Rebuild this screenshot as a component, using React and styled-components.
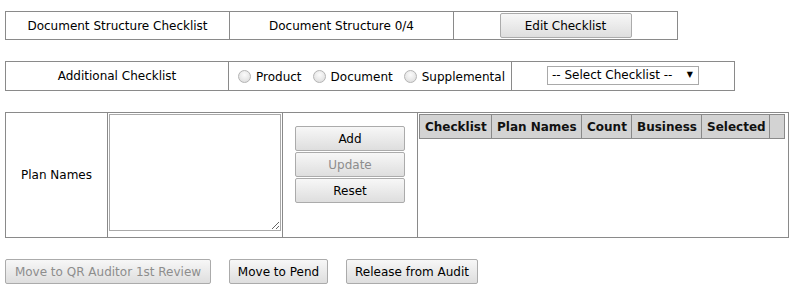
import styled, { createGlobalStyle } from "styled-components";

const GlobalStyle = createGlobalStyle`
  body {
    margin: 0;
    padding: 11px 5px;
    font-family: "DejaVu Sans", Verdana, sans-serif;
    font-size: 12px;
    color: #000;
    background: #fff;
  }
`;

const Page = styled.div`
  display: flex;
  flex-direction: column;
  align-items: flex-start;
  gap: 21px;
`;

const Row = styled.div`
  display: grid;
  grid-template-columns: ${(p) => p.$cols};
  height: ${(p) => p.$height}px;
  border: 1px solid #8a8a8a;
  box-sizing: border-box;
`;

const Cell = styled.div`
  display: flex;
  align-items: ${(p) => p.$align || "center"};
  justify-content: ${(p) => p.$justify || "center"};
  padding: ${(p) => p.$pad || "0"};
  border-left: ${(p) => (p.$first ? "none" : "1px solid #8a8a8a")};
  box-sizing: border-box;
  min-width: 0;
`;

const Button = styled.button`
  font-family: "DejaVu Sans", Verdana, sans-serif;
  font-size: 12px;
  height: 25px;
  width: ${(p) => (p.$width ? `${p.$width}px` : "auto")};
  padding: 0;
  white-space: nowrap;
  color: ${(p) => (p.disabled ? "#8d8d8d" : "#000")};
  background: linear-gradient(#f7f7f7, #dedede);
  border: 1px solid #ababab;
  border-radius: 2px;
  box-sizing: border-box;
  cursor: default;
`;

const RadioGroup = styled.div`
  display: flex;
  align-items: center;
  gap: 11px;
  padding-top: 2px;
`;

const RadioLabel = styled.label`
  display: flex;
  align-items: center;
  gap: 5px;
`;

const Radio = styled.input`
  appearance: none;
  margin: 0 0 2px 0;
  width: 13px;
  height: 13px;
  border-radius: 50%;
  border: 1px solid #b4b4b4;
  background: radial-gradient(circle at 50% 35%, #fbfbfb, #d9d9d9);
  box-sizing: border-box;
`;

const Select = styled.div`
  display: flex;
  align-items: center;
  justify-content: space-between;
  width: 152px;
  height: 19px;
  padding: 0 5px 0 4px;
  border: 1px solid #a9a9a9;
  box-sizing: border-box;
  margin-bottom: 2px;
`;

const Arrow = styled.span`
  font-size: 8px;
  line-height: 1;
`;

const TextArea = styled.textarea`
  width: 172px;
  height: 117px;
  margin: 0;
  border: 1px solid #a9a9a9;
  box-sizing: border-box;
  font-family: "DejaVu Sans", Verdana, sans-serif;
`;

const ButtonStack = styled.div`
  display: flex;
  flex-direction: column;
  gap: 1px;
`;

const HeaderGrid = styled.div`
  display: grid;
  grid-template-columns: 72px 90px 50px 70px 68px 15px;
  height: 25px;
  border: 1px solid #8a8a8a;
  border-right: none;
  box-sizing: border-box;
  background: #d3d3d3;
`;

const HeaderCell = styled.div`
  display: flex;
  align-items: center;
  padding-left: 5px;
  border-right: 1px solid #8a8a8a;
  font-weight: bold;
  color: #111;
  white-space: nowrap;
  box-sizing: border-box;
`;

const Actions = styled.div`
  display: flex;
  gap: 18px;
`;

const headers = ["Checklist", "Plan Names", "Count", "Business", "Selected", ""];

export default function App() {
  return (
    <>
      <GlobalStyle />
      <Page>
        <Row $cols="223px 224px 224px" $height={29}>
          <Cell $first>Document Structure Checklist</Cell>
          <Cell>Document Structure 0/4</Cell>
          <Cell>
            <Button $width={132}>Edit Checklist</Button>
          </Cell>
        </Row>

        <Row $cols="222px 283px 223px" $height={30}>
          <Cell $first>Additional Checklist</Cell>
          <Cell $justify="flex-start" $pad="0 0 0 9px">
            <RadioGroup>
              {["Product", "Document", "Supplemental"].map((l) => (
                <RadioLabel key={l}>
                  <Radio type="radio" name="kind" />
                  {l}
                </RadioLabel>
              ))}
            </RadioGroup>
          </Cell>
          <Cell>
            <Select>
              <span>-- Select Checklist --</span>
              <Arrow>▼</Arrow>
            </Select>
          </Cell>
        </Row>

        <Row $cols="101px 175px 135px 371px" $height={126}>
          <Cell $first>Plan Names</Cell>
          <Cell $align="flex-start" $justify="flex-start" $pad="1px 0 0 1px">
            <TextArea />
          </Cell>
          <Cell $align="flex-start" $pad="13px 0 0 0">
            <ButtonStack>
              <Button $width={110}>Add</Button>
              <Button $width={110} disabled>
                Update
              </Button>
              <Button $width={110}>Reset</Button>
            </ButtonStack>
          </Cell>
          <Cell $align="flex-start" $justify="flex-start" $pad="1px 0 0 1px">
            <HeaderGrid>
              {headers.map((h, i) => (
                <HeaderCell key={i}>{h}</HeaderCell>
              ))}
            </HeaderGrid>
          </Cell>
        </Row>

        <Actions>
          <Button $width={206} disabled>
            Move to QR Auditor 1st Review
          </Button>
          <Button $width={99}>Move to Pend</Button>
          <Button $width={132}>Release from Audit</Button>
        </Actions>
      </Page>
    </>
  );
}
